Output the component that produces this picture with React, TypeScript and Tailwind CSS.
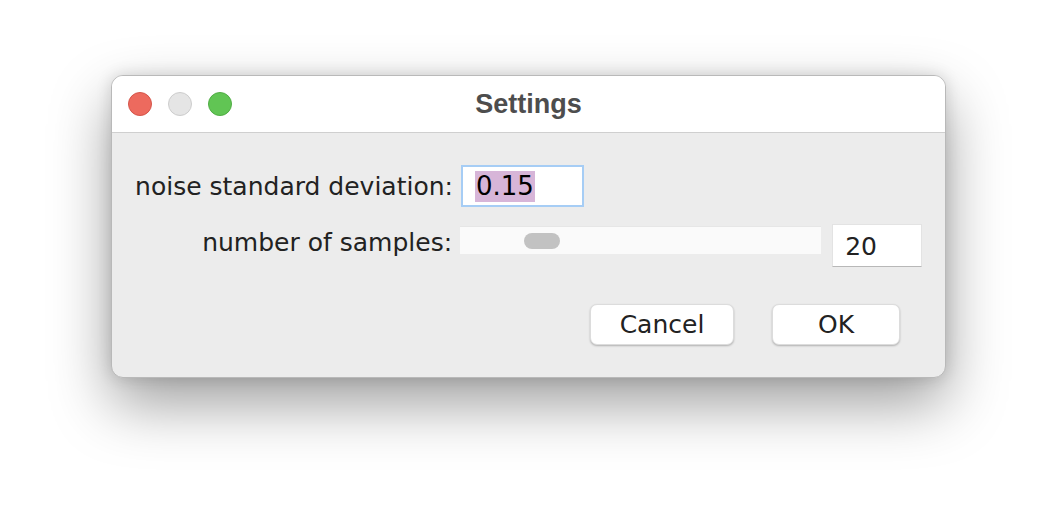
export default function App() {
  return (
    <div className="w-[1058px] h-[526px] bg-white pl-[111px] pt-[75px] font-['DejaVu_Sans',sans-serif]">
      <div className="w-[835px] h-[303px] rounded-[12px] overflow-hidden border border-[#b9b9b9] shadow-[0_26px_60px_rgba(0,0,0,0.38),0_0_16px_rgba(0,0,0,0.14)] flex flex-col bg-[#ececec]">
        {/* title bar */}
        <div className="h-[57px] bg-white border-b border-[#cfcfcf] flex items-center px-[16px] relative shrink-0">
          <div className="flex gap-[16px]">
            <span className="w-[24px] h-[24px] rounded-full bg-[#ed6a5e] border border-[#d5554a]" />
            <span className="w-[24px] h-[24px] rounded-full bg-[#e5e5e5] border border-[#cdcdcd]" />
            <span className="w-[24px] h-[24px] rounded-full bg-[#61c554] border border-[#50ad44]" />
          </div>
          <div className="absolute inset-0 flex items-center justify-center font-['Liberation_Sans',sans-serif] font-bold text-[27px] text-[#4d4d4d]">
            Settings
          </div>
        </div>

        {/* body */}
        <div className="flex-1 flex flex-col pl-[23px] pr-[23px] pt-[32px]">
          <div className="flex items-center">
            <span className="w-[318px] mt-[2px] text-right text-[25px] text-[#222] whitespace-nowrap">noise standard deviation:</span>
            <div className="ml-[8px] w-[123px] h-[42px] bg-white border-2 border-[#a6cdf5] flex items-center pl-[12px]">
              <span className="bg-[#d7b5d8] text-[26px] text-black leading-[31px] px-[1px]">0.15</span>
            </div>
          </div>

          <div className="flex items-start mt-[17px]">
            <span className="w-[318px] text-right text-[25px] text-[#222] whitespace-nowrap">number of samples:</span>
            <div className="ml-[8px] mt-[2px] w-[362px] h-[28px] bg-[#fafafa] border-t border-[#e6e6e6] flex items-center pl-[64px]">
              <span className="w-[36px] h-[16px] mt-[1px] rounded-full bg-[#c2c2c2]" />
            </div>
            <div className="ml-[11px] w-[90px] h-[43px] bg-white border border-[#e3e3e3] border-b-[#b8b8b8] flex items-center pl-[12px] pt-[2px] text-[25px] text-[#222]">
              20
            </div>
          </div>

          <div className="flex justify-end gap-[38px] mt-[37px] pr-[22px]">
            <button className="w-[144px] h-[41px] bg-white rounded-[7px] shadow-[0_1px_2px_rgba(0,0,0,0.25)] border border-[#dcdcdc] text-[25px] text-[#222]">
              Cancel
            </button>
            <button className="w-[128px] h-[41px] bg-white rounded-[7px] shadow-[0_1px_2px_rgba(0,0,0,0.25)] border border-[#dcdcdc] text-[25px] text-[#222]">
              OK
            </button>
          </div>
        </div>
      </div>
    </div>
  );
}
